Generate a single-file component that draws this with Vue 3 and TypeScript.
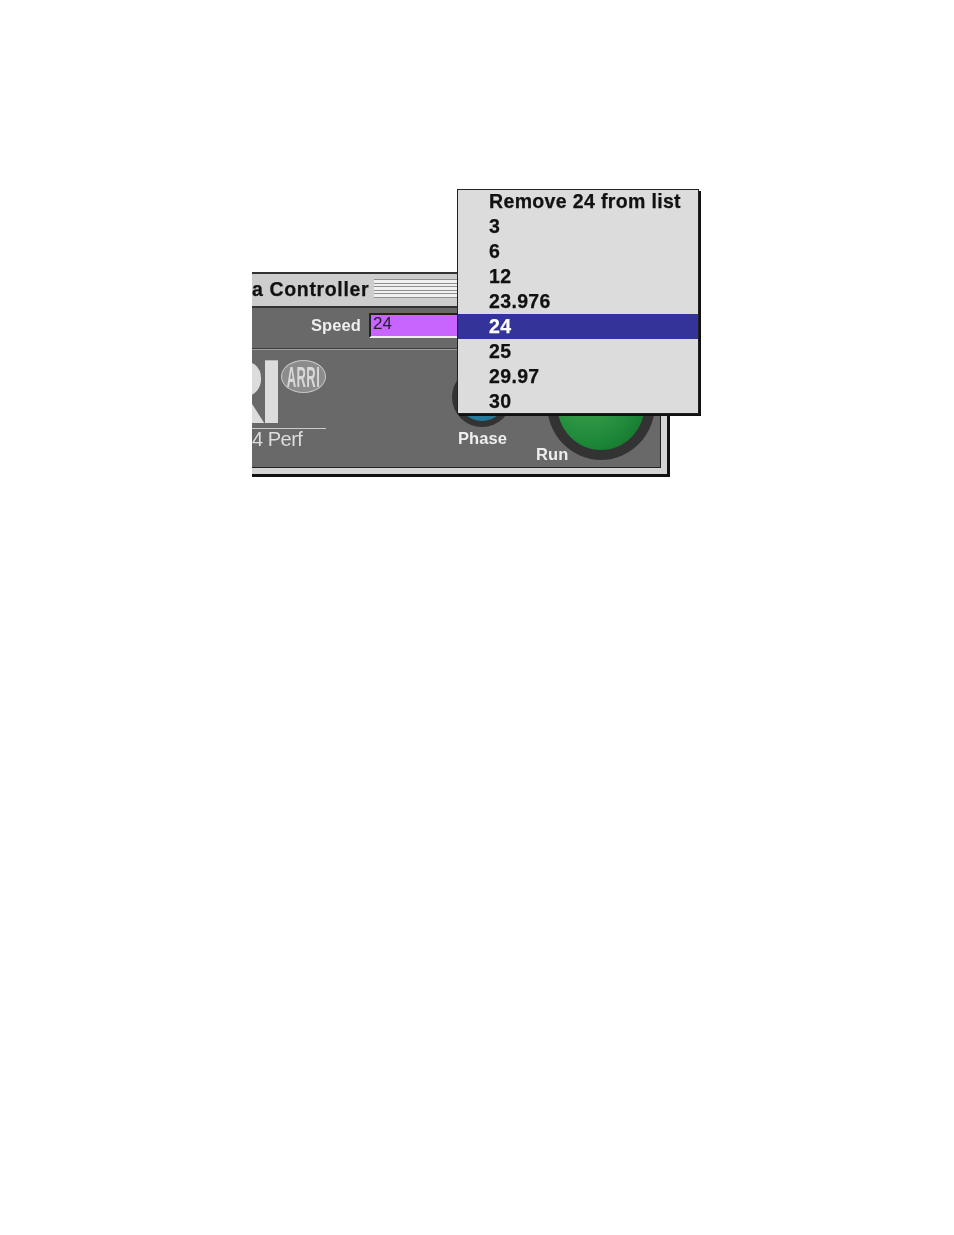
<script setup lang="ts">
interface MenuItem { label: string; selected?: boolean }
const items: MenuItem[] = [
  { label: 'Remove 24 from list' },
  { label: '3' },
  { label: '6' },
  { label: '12' },
  { label: '23.976' },
  { label: '24', selected: true },
  { label: '25' },
  { label: '29.97' },
  { label: '30' },
]
const stripes = [0, 1, 2, 3, 4, 5]
</script>

<template>
  <div class="page">
    <div class="shot">
      <div class="window">
        <div class="titlebar">
          <span class="title">a Controller</span>
          <div class="stripes"><i v-for="s in stripes" :key="s"></i></div>
        </div>
        <div class="panel">
          <div class="speedrow">
            <span class="label speed">Speed</span>
            <div class="field">24</div>
          </div>
          <div class="body">
            <div class="logoarea">
              <div class="logo">
                <span class="bigletters">RI</span>
                <div class="oval"><span>ARRI</span></div>
              </div>
              <div class="perf">4 Perf</div>
            </div>
            <div class="knob phase"><div class="knobface"></div></div>
            <span class="label phaselabel">Phase</span>
            <div class="knob run"><div class="knobface"></div></div>
            <span class="label runlabel">Run</span>
          </div>
        </div>
      </div>
      <ul class="menu">
        <li v-for="item in items" :key="item.label" :class="{ selected: item.selected }">{{ item.label }}</li>
      </ul>
    </div>
  </div>
</template>

<style>
html, body { background: #fff; }
</style>

<style scoped>
.page {
  width: 954px;
  height: 1235px;
  padding: 272px 0 0 252px;
  box-sizing: border-box;
  background: #fff;
  overflow: hidden;
  font-family: "Liberation Sans", Arial, sans-serif;
}
.shot { position: relative; width: 448px; height: 205px; }
.window {
  width: 418px;
  height: 205px;
  box-sizing: border-box;
  display: flex;
  flex-direction: column;
  border-top: 2px solid #333;
  border-right: 3px solid #111;
  border-bottom: 3px solid #111;
  background: #d4d4d4;
  padding: 0 6px 6px 0;
  filter: blur(0.4px);
}
.titlebar {
  height: 34px;
  flex: none;
  display: flex;
  align-items: flex-start;
  background: #cdcdcd;
  margin-right: -6px;
  border-bottom: 2px solid #333;
  box-sizing: border-box;
}
.title {
  font-family: "Liberation Sans", sans-serif;
  font-weight: 700;
  font-size: 19.5px;
  line-height: 31px;
  letter-spacing: 0.65px;
  color: #111;
  -webkit-text-stroke: 0.25px #111;
  white-space: nowrap;
}
.stripes {
  margin: 5px 0 0 5px;
  flex: 1;
  height: 19px;
  display: flex;
  flex-direction: column;
  justify-content: space-between;
  background: #f0f0f0;
}
.stripes i { display: block; height: 1px; background: #8f8f8f; }
.panel {
  flex: 1;
  display: flex;
  flex-direction: column;
  background: #696969;
  border-bottom: 1px solid #222;
  border-right: 1px solid #222;
}
.speedrow {
  height: 41px;
  flex: none;
  display: flex;
  align-items: flex-start;
  justify-content: flex-end;
  box-sizing: border-box;
  border-bottom: 1px solid #3c3c3c;
  box-shadow: 0 1px 0 #a0a0a0;
  padding-top: 5px;
}
.label {
  font-family: "Liberation Sans", sans-serif;
  font-weight: 700;
  font-size: 16.5px;
  letter-spacing: 0.1px;
  color: #eee;
  white-space: nowrap;
}
.speed { margin-right: 8px; line-height: 24px; }
.field {
  width: 291px;
  flex: none;
  height: 25px;
  box-sizing: border-box;
  background: #c864ff;
  border-top: 2px solid #222;
  border-left: 2px solid #222;
  border-bottom: 2px solid #eee;
  color: #222;
  font-size: 17px;
  line-height: 18px;
  padding-left: 2px;
}
.body { position: relative; flex: 1; overflow: hidden; }
.logoarea { width: 74px; padding-top: 10px; }
.logo { position: relative; height: 69px; border-bottom: 1px solid #ccc; overflow: hidden; }
.bigletters {
  position: absolute;
  right: 49px;
  top: 1px;
  font-family: "Liberation Sans", sans-serif;
  font-weight: 700;
  font-size: 90px;
  line-height: 64px;
  letter-spacing: -7px;
  color: #dcdcdc;
}
.oval {
  position: absolute;
  right: 0;
  top: 1px;
  width: 45px;
  height: 33px;
  border-radius: 50%;
  background: #8c8c8c;
  border: 1px solid #c8c8c8;
  box-sizing: border-box;
  display: flex;
  align-items: center;
  justify-content: center;
  overflow: hidden;
}
.oval span {
  font-family: "Liberation Sans", sans-serif;
  font-weight: 700;
  font-size: 13px;
  color: #d8d8d8;
  transform: scaleY(2.3);
  letter-spacing: 0.4px;
}
.perf {
  font-size: 20px;
  font-weight: 400;
  letter-spacing: -0.5px;
  color: #ddd;
  line-height: 20px;
}
.knob { position: absolute; border-radius: 50%; background: #333; display: flex; align-items: center; justify-content: center; }
.knobface { border-radius: 50%; }
.phase { left: 200px; top: 18px; width: 60px; height: 60px; }
.phase .knobface { width: 48px; height: 48px; background: radial-gradient(circle at 50% 30%, #3aa0c8, #1d6e8e); }
.run { left: 295px; top: -1px; width: 108px; height: 112px; }
.run .knobface { width: 88px; height: 92px; background: radial-gradient(circle at 35% 35%, #45a850, #1f8a3a 60%, #0f6a25); }
.phaselabel { position: absolute; left: 206px; top: 80px; }
.runlabel { position: absolute; left: 284px; top: 96px; }
.menu {
  position: absolute;
  left: 205px;
  top: -83px;
  width: 240px;
  margin: 0;
  padding: 0;
  list-style: none;
  background: #dcdcdc;
  border: 1px solid #222;
  box-shadow: 2px 2px 0 #111;
  box-sizing: content-box;
  filter: blur(0.4px);
}
.menu li {
  height: 25px;
  line-height: 24px;
  padding-left: 31px;
  font-family: "Liberation Sans", sans-serif;
  font-weight: 700;
  font-size: 19.5px;
  letter-spacing: 0.35px;
  color: #111;
  -webkit-text-stroke: 0.25px currentColor;
  white-space: nowrap;
}
.menu li:first-child { height: 24px; line-height: 23px; }
.menu li:last-child { height: 24px; }
.menu li.selected { background: #333399; color: #fff; }
</style>
